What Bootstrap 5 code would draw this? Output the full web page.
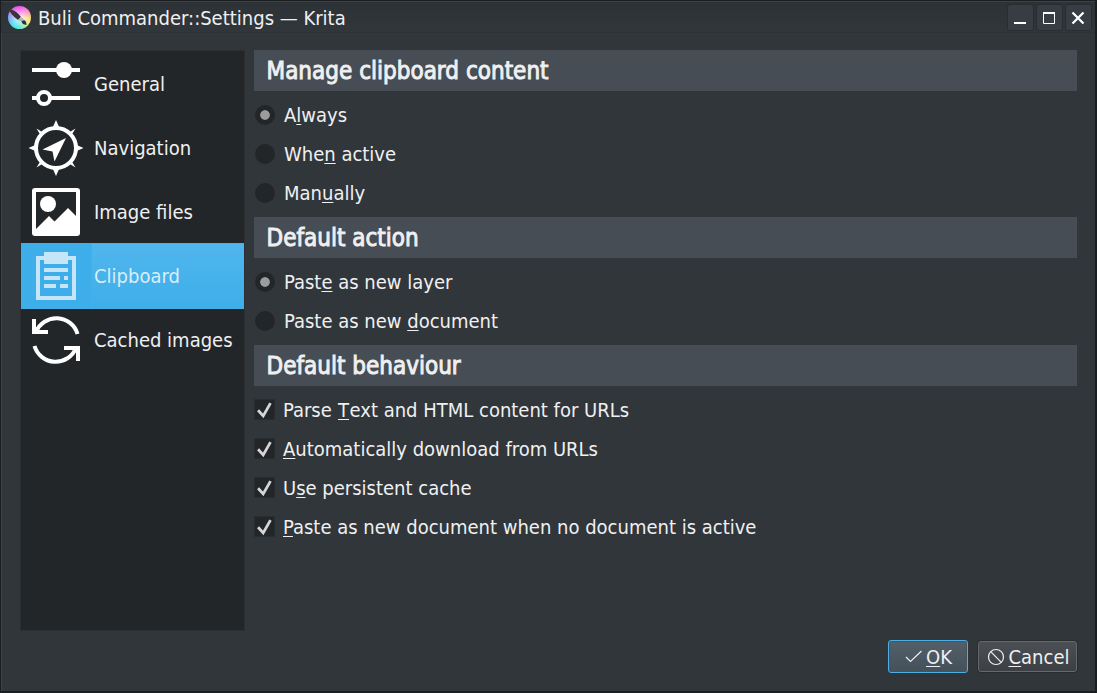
<!DOCTYPE html>
<html lang="en">
<head>
<meta charset="utf-8">
<meta name="viewport" content="width=device-width, initial-scale=1">
<title>Buli Commander::Settings — Krita</title>
<link href="https://cdn.jsdelivr.net/npm/bootstrap@5.3.0/dist/css/bootstrap.min.css" rel="stylesheet">
<style>
body{font-family:"DejaVu Sans Condensed","DejaVu Sans",sans-serif;font-stretch:condensed;font-size:20px;line-height:24px;color:#eff0f1;background:#31363b}
.window{height:693px;border:1px solid #1b1e21;border-bottom-width:2px;border-right-width:2px;background:#31363b;box-shadow:inset 1px 1px #3d4247}
.titlebar{height:32px;padding:0 3px 0 6px;background:linear-gradient(#2d3236,#31363b);border-top:1px solid #3d4247;border-bottom:1px solid #2d3236}
.app-icon{width:23px;height:23px;border-radius:50%;margin-left:.5px;background:radial-gradient(circle,#fffc 0,#fff0 65%),conic-gradient(#f94df0,#fa9bc0 60deg,#f6e873 100deg,#d8ef88 135deg,#58e8dc 180deg,#4fe4f0 215deg,#6fb4f4 260deg,#b37af2 300deg,#f94df0)}
.app-icon svg{display:block;overflow:visible}
.title-text{font-size:20px;margin-left:7.5px;line-height:30px;padding-top:2px}
.win-btn{width:27px;height:27px;margin-left:2px;background:#383d44;border:1px solid #292d31;border-radius:3px;color:#fff;padding:0;display:block}
.win-btn svg{display:block}
.content{padding:17px 18px 0 19px}
.sidebar{width:225px;height:581px;background:#232629;border:1px solid #2b2f32}
.side-item{height:64px;padding:0;border:0;border-radius:0!important;background:transparent;color:#eff0f1}
.side-item svg{width:70px;height:64px;flex:none}
.side-item .side-label{padding:2px 0 0 3px;flex:1;line-height:62px}
.sidebar .side-item.active{height:66px;margin:0 0 -2px!important;background:#3daee9;color:#d8eefa}
.side-item.active .side-label{padding-top:0;line-height:66px;background:linear-gradient(#50b6ed,#3eaee9);box-shadow:inset 1px 1px #49afe5}
.side-item.active svg{height:66px}
.panel{margin-left:9px}
.section-title{height:41px;line-height:39px;padding:2px 0 0 12.5px;margin:0;background:#474d54;font-size:24px;font-weight:400;-webkit-text-stroke:.9px #eff0f1}
.options{padding:4px 0 5px}
.option{height:39px;margin:0;padding:0;display:flex;align-items:center}
.option .form-check-input{width:20px;height:20px;margin:0 0 0 1px;float:none;flex:none;border:0;background-color:#232629;background-size:20px}
.option .form-check-input[type=radio]:checked{background-image:radial-gradient(circle,#9b9c9d 4.4px,#232629 5.2px)}
.option .form-check-input[type=checkbox]{width:21px;height:21px;margin-left:0;border:1px solid #292d30;border-radius:0}
.option .form-check-input[type=checkbox]:checked{background-image:url("data:image/svg+xml,%3Csvg xmlns='http://www.w3.org/2000/svg' viewBox='0 0 20 20'%3E%3Cpath d='M3.5 10.5 8.5 16 15.6 3.5' fill='none' stroke='%23d5d6d7' stroke-width='2.7'/%3E%3C/svg%3E")}
.option label{margin-left:9px}
.option [type=checkbox]+label{margin-left:8px}
u{text-decoration:underline 1px;text-underline-offset:2px;text-decoration-skip-ink:none}
.unkerned{display:inline-block;margin:0 .5px}
.actions{gap:10px;padding:9px 0 0}
.dlg-btn{display:flex;align-items:center;justify-content:center;padding:0;font:inherit;line-height:24px;color:#eff0f1;border-radius:3px}
.btn-ok{width:80px;height:33px;border:1px solid #4cb0e6;background:linear-gradient(#535f69,#44515a);box-shadow:inset 0 0 0 1px #46545e}
.btn-no{width:99px;height:31px;padding-left:1px;border:1px solid #66696c;background:linear-gradient(#4c5054,#3c4044);box-shadow:0 0 0 1px #292d30}
</style>
</head>
<body>
<div class="window">
  <header class="titlebar d-flex align-items-center">
    <span class="app-icon"><svg width="23" height="23" viewBox="0 0 23 23">
      <path d="M0 2Q9 5 13 11l-3 3Q3 9 0 2z" fill="#3a3338"/>
      <path d="m10 14 3-3 3 2.500-2.500 2.500z" fill="#b2b4c5"/>
      <path d="M13.500 15.500Q18 12 18.500 19 14 18.500 13.500 15.500z" fill="#20354a"/>
    </svg></span>
    <span class="title-text me-auto">Buli Commander::Settings — Krita</span>
    <button class="win-btn" aria-label="Minimize"><svg width="25" height="25"><path d="M6 18h12" stroke="#fff" stroke-width="2"/></svg></button>
    <button class="win-btn" aria-label="Maximize"><svg width="25" height="25"><path d="M6.500 8v10.500h11V8" fill="none" stroke="#fff"/><path d="M6 8h12" stroke="#fff" stroke-width="2"/></svg></button>
    <button class="win-btn" aria-label="Close"><svg width="25" height="25"><path d="m6.500 7.500 11 11m0-11-11 11" stroke="#fff" stroke-width="2.300"/></svg></button>
  </header>
  <main class="content">
    <div class="d-flex">
      <nav class="sidebar list-group rounded-0 flex-shrink-0">
        <a class="side-item list-group-item d-flex align-items-center"><svg viewBox="0 0 70 64"><path d="M11 19h48M11 47h48" stroke="#fff" stroke-width="4"/><circle cx="43" cy="19" r="8" fill="#fff"/><circle cx="23" cy="47" r="6" fill="#232629" stroke="#fff" stroke-width="4"/></svg><span class="side-label">General</span></a>
        <a class="side-item list-group-item d-flex align-items-center"><svg viewBox="0 0 70 64" fill="#fff"><circle cx="35" cy="33" r="20" fill="none" stroke="#fff" stroke-width="4"/><path d="m35 5 3.500 8h-7zM35 61l3.500-8h-7zM7.500 33l8-3.500v7zM62.500 33l-8-3.500v7zM15.500 13.500l6.500 4-2.500 2.500zM54.500 13.500l-6.500 4 2.500 2.500zM15.500 52.500l6.500-4-2.500-2.500zM54.500 52.500l-6.500-4 2.500-2.500z"/><path d="M45 23 33.500 46.500l-2-10L21.500 34.500z"/></svg><span class="side-label">Navigation</span></a>
        <a class="side-item list-group-item d-flex align-items-center"><svg viewBox="0 0 70 64"><path fill="#fff" fill-rule="evenodd" d="M14 9h42q3 0 3 3v42q0 3-3 3H14q-3 0-3-3V12q0-3 3-3zm1 4v37l13-13 5.500 5.500L47 29l8 8V13z"/><circle cx="27" cy="25" r="8" fill="#fff"/></svg><span class="side-label">Image files</span></a>
        <a class="side-item list-group-item active d-flex align-items-center"><svg viewBox="0 0 70 66"><path d="M17 15h36v40H17z" fill="none" stroke="#c5e6f8" stroke-width="4"/><path d="M23 9h24v12H23zM23 25h24v4H23zM23 33h16v4H23zM43 33h4v4h-4zM23 41h12v4H23zM39 41h8v4h-8z" fill="#c5e6f8"/></svg><span class="side-label">Clipboard</span></a>
        <a class="side-item list-group-item d-flex align-items-center"><svg viewBox="0 0 70 64" fill="none" stroke="#fff" stroke-width="4"><path d="M15 25A22 22 0 0 1 56.500 27M13.500 39A22 22 0 0 0 55 41"/><path d="M13 12v13h14M57 54V41H43"/></svg><span class="side-label">Cached images</span></a>
      </nav>
      <section class="panel flex-grow-1">
        <h2 class="section-title">Manage clipboard content</h2>
        <div class="options">
          <div class="option form-check"><input class="form-check-input" type="radio" name="manage" id="r1" checked><label for="r1">A<u>l</u>ways</label></div>
          <div class="option form-check"><input class="form-check-input" type="radio" name="manage" id="r2"><label for="r2">Whe<u>n</u> active</label></div>
          <div class="option form-check"><input class="form-check-input" type="radio" name="manage" id="r3"><label for="r3">Man<u>u</u>ally</label></div>
        </div>
        <h2 class="section-title">Default action</h2>
        <div class="options">
          <div class="option form-check"><input class="form-check-input" type="radio" name="action" id="r4" checked><label for="r4">Past<u>e</u> as new layer</label></div>
          <div class="option form-check"><input class="form-check-input" type="radio" name="action" id="r5"><label for="r5">Paste as new <u>d</u>ocument</label></div>
        </div>
        <h2 class="section-title">Default behaviour</h2>
        <div class="options">
          <div class="option form-check"><input class="form-check-input" type="checkbox" id="c1" checked><label for="c1">Parse <u class="unkerned">T</u>ext and HTML content for URLs</label></div>
          <div class="option form-check"><input class="form-check-input" type="checkbox" id="c2" checked><label for="c2"><u>A</u>utomatically download from URLs</label></div>
          <div class="option form-check"><input class="form-check-input" type="checkbox" id="c3" checked><label for="c3">U<u>s</u>e persistent cache</label></div>
          <div class="option form-check"><input class="form-check-input" type="checkbox" id="c4" checked><label for="c4"><u>P</u>aste as new document when no document is active</label></div>
        </div>
      </section>
    </div>
    <footer class="actions d-flex justify-content-end align-items-center">
      <button class="dlg-btn btn-ok"><svg width="22" height="22" viewBox="0 0 22 22" fill="none" stroke="#eff0f1" stroke-width="1.200"><path d="m2 11 4.500 4.500L17.500 5"/></svg><span><u>O</u>K</span></button>
      <button class="dlg-btn btn-no"><svg class="me-1" width="18" height="18" viewBox="0 0 18 18" fill="none" stroke="#eff0f1" stroke-width="1.200"><circle cx="9" cy="9" r="7.500"/><path d="m3.700 3.700 10.600 10.600"/></svg><span><u>C</u>ancel</span></button>
    </footer>
  </main>
</div>
<script src="https://cdn.jsdelivr.net/npm/bootstrap@5.3.0/dist/js/bootstrap.bundle.min.js"></script>
</body>
</html>
